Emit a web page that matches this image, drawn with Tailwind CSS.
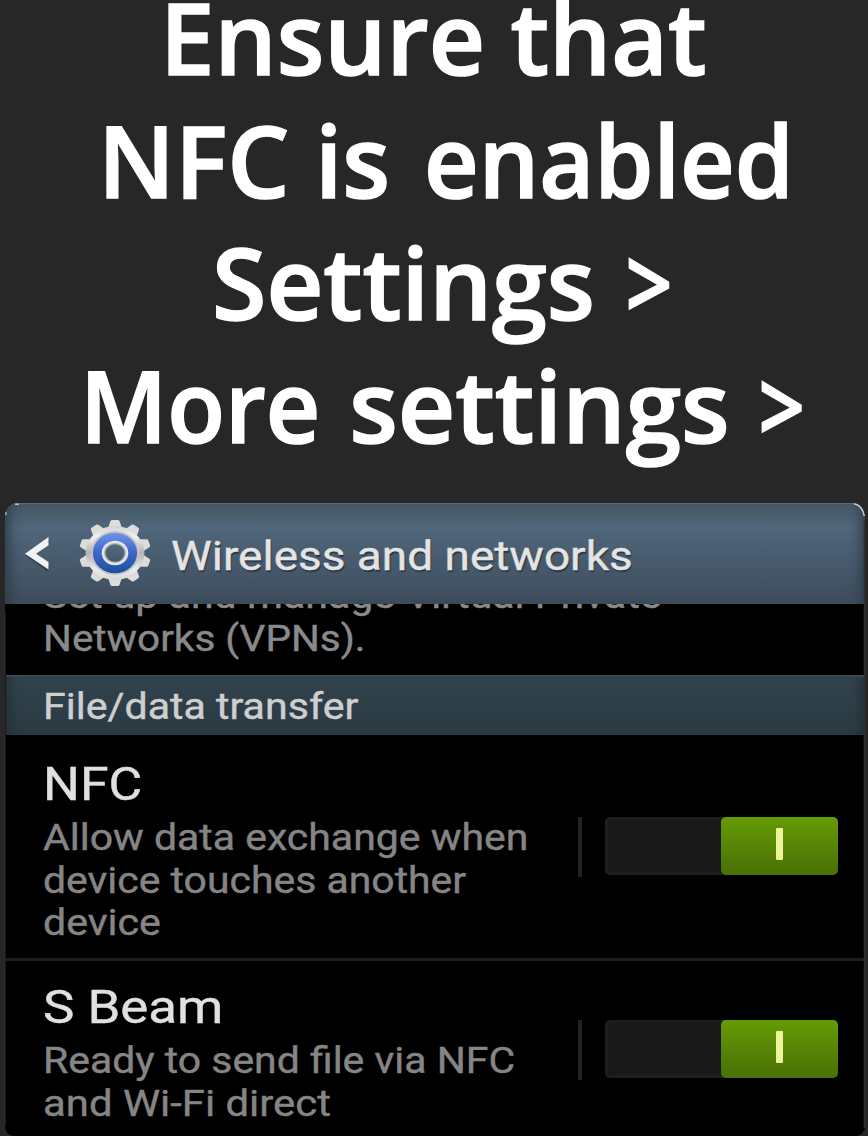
<!DOCTYPE html>
<html lang="en">
<head>
<meta charset="utf-8">
<title>Enable NFC</title>
<script src="https://cdn.jsdelivr.net/npm/@tailwindcss/browser@4"></script>
</head>
<body class="bg-[#272727]">
<main class="flex h-[1136px] w-[868px] flex-col overflow-hidden">
  <h1 class="-mt-[25px] flex h-[528px] shrink-0 flex-col items-start font-['Open_Sans',sans-serif] text-[100px] leading-[122.7px] font-semibold whitespace-nowrap text-white [-webkit-text-stroke:1.6px_white]">
    <span class="ml-[160px] origin-left scale-x-[0.978]">Ensure that</span>
    <span class="ml-[98px] origin-left scale-x-[0.982]">NFC is <span class="ml-[8px] inline-block origin-left scale-x-[0.968]">enabled</span></span>
    <span class="ml-[211.5px] origin-left scale-x-[0.989]">Settings <span class="ml-[5px] inline-block origin-left scale-x-[0.83]">&gt;</span></span>
    <span class="ml-[80px] origin-left scale-x-[0.979]"><span class="inline-block origin-left scale-x-[0.967]">More</span> <span class="-ml-[5px] inline-block origin-left scale-x-[1.02]">settings</span> <span class="ml-[11px] inline-block origin-left scale-x-[0.83]">&gt;</span></span>
  </h1>

  <section class="relative ml-[5px] flex h-[633px] w-[860px] shrink-0 flex-col overflow-hidden rounded-t-[12px] rounded-b-[9px] bg-black font-[Roboto,sans-serif] whitespace-nowrap [-webkit-text-stroke:0.4px_currentColor]">
    <header class="flex h-[101px] shrink-0 items-center bg-linear-to-b from-[#435862] via-[#50667b] via-25% to-[#3d4c5c] shadow-[inset_0_1px_1px_#5b6c76,inset_14px_0_12px_-10px_#2d3b46,inset_-14px_0_12px_-10px_#2d3b46]">
      <svg class="ml-[19px] h-[34px] w-[27px] shrink-0" viewBox="0 0 27 34" fill="none">
        <path d="M24.5 3.5 5 18.3 24.5 32.5" stroke="#26333d" stroke-width="4.5" stroke-opacity=".6"/>
        <path d="M24.500 0V8.200L12 16.800 24.500 25V32.500L1 16.800Z" fill="#f2f2f2"/>
      </svg>
      <svg class="ml-[25.500px] h-[70px] w-[76px] shrink-0" viewBox="-38 -35 76 70">
        <defs>
          <linearGradient id="metal" x1="0" y1="0" x2="0" y2="1"><stop offset="0" stop-color="#d4d4d4"/><stop offset=".2" stop-color="#f0f0f0"/><stop offset=".5" stop-color="#b4b2b2"/><stop offset=".8" stop-color="#ececec"/><stop offset="1" stop-color="#d8d8d8"/></linearGradient>
          <linearGradient id="blue" x1="0" y1="0" x2="0" y2="1"><stop offset="0" stop-color="#6f95ea"/><stop offset=".45" stop-color="#4169cb"/><stop offset="1" stop-color="#1c4f9c"/></linearGradient>
          <linearGradient id="hole" x1="0" y1="0" x2="0" y2="1"><stop offset="0" stop-color="#566b7d"/><stop offset="1" stop-color="#43596a"/></linearGradient>
          <path id="tooth" d="M-6-26 -4.200-31.800Q-3.800-33 -2.500-33H2.500Q3.800-33 4.200-31.800L6-26Z"/>
        </defs>
        <g transform="translate(0 -1) scale(1.09 1)">
          <g fill="#dcdcdc">
            <use href="#tooth"/><use href="#tooth" transform="rotate(36)"/><use href="#tooth" transform="rotate(72)"/><use href="#tooth" transform="rotate(108)"/><use href="#tooth" transform="rotate(144)"/><use href="#tooth" transform="rotate(180)"/><use href="#tooth" transform="rotate(216)"/><use href="#tooth" transform="rotate(252)"/><use href="#tooth" transform="rotate(288)"/><use href="#tooth" transform="rotate(324)"/>
          </g>
          <circle r="27" fill="url(#metal)"/>
          <circle r="22" fill="#c4c3c4"/>
          <circle r="20.300" fill="url(#blue)"/>
          <circle r="12.200" fill="#e6e6ea"/>
          <circle r="10" fill="#a9afb6"/>
          <circle r="8.700" fill="url(#hole)"/>
        </g>
      </svg>
      <span class="ml-[18.500px] origin-left scale-x-[1.121] pt-[5px] text-[41px] leading-none text-[#e4e4e4] [text-shadow:1px_2px_1px_#2b3742]">Wireless and networks</span>
    </header>

    <div class="flex h-[71px] shrink-0 flex-col items-start overflow-hidden pl-[38px] text-[36px] leading-[42.500px] text-[#8a8a8a]">
      <span class="-mt-[29px] origin-left scale-x-[1.14]">Set up and manage Virtual Private</span>
      <span class="origin-left scale-x-[1.125]">Networks (VPNs).</span>
    </div>

    <h2 class="flex h-[60px] shrink-0 items-center bg-linear-to-b from-[#33434e] to-[#2a3a43] pt-[3px] pl-[37.500px] text-[36px] leading-none text-[#cfcfcf] shadow-[inset_0_2px_1px_#384855,inset_14px_0_12px_-10px_#202d34,inset_-14px_0_12px_-10px_#202d34]"><span class="origin-left scale-x-[1.142]">File/data transfer</span></h2>

    <div class="flex h-[226px] shrink-0 items-start border-b-3 border-[#1e1e1e] pl-[38px]">
      <div class="flex w-[535px] shrink-0 flex-col items-start pt-5">
        <h3 class="origin-left scale-x-[1.1] text-[47px] leading-[58px] text-[#e0e0e0]">NFC</h3>
        <p class="mt-1 flex flex-col items-start text-[36px] leading-[42.500px] text-[#858585]">
          <span class="origin-left scale-x-[1.138]">Allow data exchange when</span>
          <span class="origin-left scale-x-[1.137]">device touches another</span>
          <span class="origin-left scale-x-[1.141]">device</span>
        </p>
      </div>
      <div class="mt-[82px] h-[60px] w-1 bg-[#222]"></div>
      <div class="mt-[82px] ml-[23px] flex h-[58px] w-[233px] justify-end rounded-[5px] border-3 border-[#1e1e1e] bg-[#181818]">
        <div class="-m-[3px] flex h-[58px] w-[117px] items-start justify-center rounded-[5px] bg-linear-to-b from-[#669b06] to-[#497005] pt-[11px]"><div class="h-8 w-[7px] rounded-[1px] bg-[#ecf59b]"></div></div>
      </div>
    </div>

    <div class="flex h-[175px] shrink-0 items-start pl-[38px]">
      <div class="flex w-[535px] shrink-0 flex-col items-start pt-[17px]">
        <h3 class="origin-left scale-x-[1.123] text-[47px] leading-[58px] text-[#e0e0e0]">S Beam</h3>
        <p class="mt-1 flex flex-col items-start text-[36px] leading-[42.500px] text-[#858585]">
          <span class="origin-left scale-x-[1.137]">Ready to send file via NFC</span>
          <span class="origin-left scale-x-[1.163]">and Wi-Fi direct</span>
        </p>
      </div>
      <div class="mt-[59px] h-[60px] w-1 bg-[#222]"></div>
      <div class="mt-[58.500px] ml-[23px] flex h-[58px] w-[233px] justify-end rounded-[5px] border-3 border-[#1e1e1e] bg-[#181818]">
        <div class="-m-[3px] flex h-[58px] w-[117px] items-start justify-center rounded-[5px] bg-linear-to-b from-[#669b06] to-[#497005] pt-[11px]"><div class="h-8 w-[7px] rounded-[1px] bg-[#ecf59b]"></div></div>
      </div>
    </div>
    <svg class="absolute inset-0 h-full w-full" viewBox="0 0 860 633" fill="none">
      <path d="M859.500 18V625" stroke="#303030" stroke-width="1.500"/>
      <path d="M849 .7Q857 2 859.300 13" stroke="#c8cccc" stroke-width="1.500"/>
      <path d="M10 1.200H14M.800 12V9" stroke="#b8c0c0" stroke-width="1.500"/>
      <path d="M.500 110V623" stroke="#1a1a1a"/>
    </svg>
  </section>
</main>
</body>
</html>
